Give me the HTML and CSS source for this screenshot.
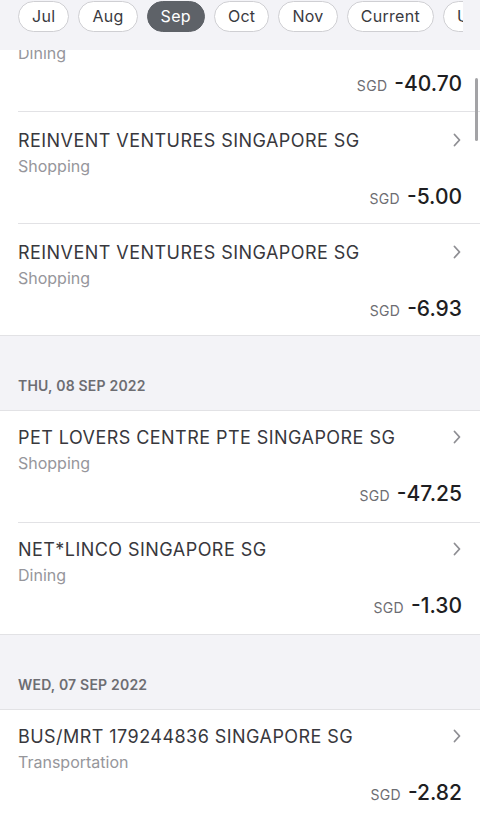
FILE: index.html
```html
<!DOCTYPE html>
<html lang="en">
<head>
<meta charset="utf-8">
<title>Transactions</title>
<link rel="stylesheet" href="styles.css">
</head>
<body>
<header class="months">
  <div class="pills">
    <span class="pill">Jul</span>
    <span class="pill">Aug</span>
    <span class="pill active">Sep</span>
    <span class="pill">Oct</span>
    <span class="pill">Nov</span>
    <span class="pill">Current</span>
    <span class="pill">Upcoming</span>
  </div>
</header>
<div class="scrollbar"></div>
<main class="list">
  <section class="group first">
    <div class="row partial">
      <div class="cat">Dining</div>
      <div class="amount"><span class="cur">SGD</span><span class="val">-40.70</span></div>
    </div>
    <div class="row">
      <div class="title-line"><span class="title">REINVENT VENTURES SINGAPORE SG</span><svg class="chev" viewBox="0 0 10 14"><path d="M2.5 1.5 L7.5 7 L2.5 12.5"/></svg></div>
      <div class="cat">Shopping</div>
      <div class="amount"><span class="cur">SGD</span><span class="val">-5.00</span></div>
    </div>
    <div class="row">
      <div class="title-line"><span class="title">REINVENT VENTURES SINGAPORE SG</span><svg class="chev" viewBox="0 0 10 14"><path d="M2.5 1.5 L7.5 7 L2.5 12.5"/></svg></div>
      <div class="cat">Shopping</div>
      <div class="amount"><span class="cur">SGD</span><span class="val">-6.93</span></div>
    </div>
  </section>
  <div class="date">THU, 08 SEP 2022</div>
  <section class="group">
    <div class="row">
      <div class="title-line"><span class="title">PET LOVERS CENTRE PTE SINGAPORE SG</span><svg class="chev" viewBox="0 0 10 14"><path d="M2.5 1.5 L7.5 7 L2.5 12.5"/></svg></div>
      <div class="cat">Shopping</div>
      <div class="amount"><span class="cur">SGD</span><span class="val">-47.25</span></div>
    </div>
    <div class="row">
      <div class="title-line"><span class="title">NET*LINCO SINGAPORE SG</span><svg class="chev" viewBox="0 0 10 14"><path d="M2.5 1.5 L7.5 7 L2.5 12.5"/></svg></div>
      <div class="cat">Dining</div>
      <div class="amount"><span class="cur">SGD</span><span class="val">-1.30</span></div>
    </div>
  </section>
  <div class="date">WED, 07 SEP 2022</div>
  <section class="group">
    <div class="row">
      <div class="title-line"><span class="title">BUS/MRT 179244836 SINGAPORE SG</span><svg class="chev" viewBox="0 0 10 14"><path d="M2.5 1.5 L7.5 7 L2.5 12.5"/></svg></div>
      <div class="cat">Transportation</div>
      <div class="amount"><span class="cur">SGD</span><span class="val">-2.82</span></div>
    </div>
  </section>
</main>
</body>
</html>
```

FILE: styles.css
```css
* { box-sizing: border-box; }
html, body { margin: 0; padding: 0; }
body {
  width: 480px;
  height: 816px;
  overflow: hidden;
  background: #ffffff;
  font-family: Inter, "Noto Sans", sans-serif;
  color: #3a3a3f;
  position: relative;
}
.months {
  position: absolute;
  top: 0; left: 0; right: 0;
  height: 50px;
  background: #f3f3f7;
  z-index: 2;
  padding: 1px 17px 0 18px;
}
.pills {
  display: flex;
  gap: 9px;
  overflow: hidden;
  white-space: nowrap;
}
.pill {
  flex: none;
  height: 31px;
  line-height: 29px;
  padding: 0 13px;
  border: 1px solid #cfcfd3;
  border-radius: 16px;
  background: #ffffff;
  font-size: 16px;
  letter-spacing: 0.3px;
  color: #3a3a3f;
}
.pill.active {
  background: #5e6268;
  border-color: #5e6268;
  color: #ffffff;
}
.scrollbar {
  position: absolute;
  top: 78px;
  right: 2px;
  width: 3px;
  height: 63px;
  border-radius: 2px;
  background: #a3a3a6;
  z-index: 3;
}
.list {
  display: flex;
  flex-direction: column;
}
.group {
  background: #ffffff;
  border-bottom: 1px solid #e2e2e5;
}
.row {
  margin-left: 18px;
  padding: 17px 18px 0 0;
  height: 112px;
  border-bottom: 1px solid #e2e2e5;
  display: flex;
  flex-direction: column;
}
.group:not(.first) .row { padding-top: 15px; }
.row:last-child {
  border-bottom: none;
  height: 111px;
}
.row.partial { padding-top: 43px; }
.title-line {
  display: flex;
  align-items: center;
  justify-content: space-between;
  height: 22px;
}
.title {
  font-size: 18px;
  letter-spacing: 0.45px;
  color: #38383d;
}
.chev {
  width: 10px;
  height: 14px;
  fill: none;
  stroke: #8e8e93;
  stroke-width: 1.8;
  stroke-linecap: round;
  stroke-linejoin: round;
}
.cat {
  margin-top: 5px;
  font-size: 16px;
  line-height: 20px;
  color: #96969b;
}
.row.partial .cat { margin-top: 0; }
.amount {
  margin-top: 8px;
  height: 26px;
  display: flex;
  justify-content: flex-end;
  align-items: baseline;
  gap: 7px;
}
.cur {
  font-size: 14px;
  color: #6d6d72;
  letter-spacing: 0.3px;
}
.val {
  font-size: 21px;
  font-weight: 500;
  color: #1e1e22;
}
.date {
  background: #f3f3f7;
  height: 75px;
  border-bottom: 1px solid #e2e2e5;
  padding: 41px 18px 0;
  font-size: 14px;
  font-weight: 600;
  color: #6d6d72;
  letter-spacing: 0.2px;
  line-height: 17px;
}
```
